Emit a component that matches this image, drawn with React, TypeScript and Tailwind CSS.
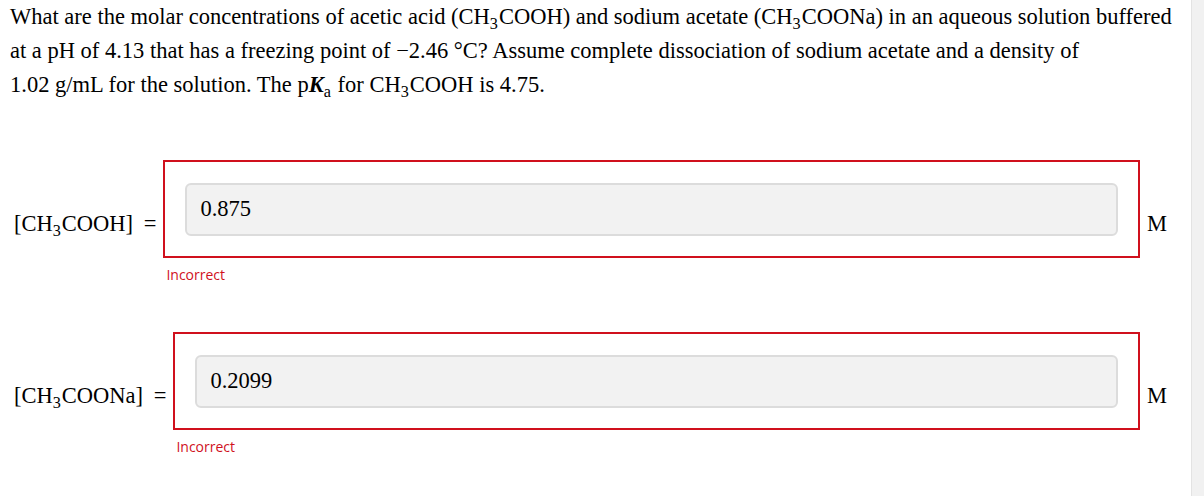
import React from 'react'

const serif = { fontFamily: '"Liberation Serif", "Times New Roman", serif' }

function Sub({ children }: { children: React.ReactNode }) {
  return <sub className="text-[0.72em] bottom-[-0.32em] pr-[1px]">{children}</sub>
}

function AnswerRow({ label, value }: { label: React.ReactNode; value: string }) {
  return (
    <div className="flex items-center">
      <div className="shrink-0 pl-[4px] pr-[7px] text-[22.5px] text-black whitespace-nowrap">
        {label} <span className="ml-[5px]">=</span>
      </div>
      <div className="flex-1 flex flex-col">
        <div className="border-2 border-[#d0101d] px-[20px] pt-[21px] pb-[20px]">
          <div className="h-[53px] rounded-[6px] border-2 border-[#dcdcdc] bg-[#f2f2f2] pl-[13px] pt-[11px] text-[22.5px] text-black leading-[26px]">
            {value}
          </div>
        </div>
        <div
          className="pl-[3px] pt-[7px] h-[30px] text-[14px] leading-[20px] text-[#d0101d]"
          style={{ fontFamily: '"Open Sans", "Noto Sans", sans-serif' }}
        >
          Incorrect
        </div>
      </div>
      <div className="shrink-0 ml-[7px] mr-[24px] text-[22.5px] text-black">M</div>
    </div>
  )
}

export default function App() {
  return (
    <div className="flex w-[1204px] h-[496px] bg-white overflow-hidden" style={serif}>
      <div className="flex-1 pl-[10px]">
        <p className="text-[22.5px] leading-[34px] text-black whitespace-nowrap">
          What are the molar concentrations of acetic acid (CH<Sub>3</Sub>COOH) and sodium acetate (CH<Sub>3</Sub>COONa) in an aqueous solution buffered
          <br />
          at a pH of 4.13 that has a freezing point of −2.46 °C? Assume complete dissociation of sodium acetate and a density of
          <br />
          1.02 g/mL for the solution. The p<b><i>K</i></b><Sub>a</Sub> for CH<Sub>3</Sub>COOH is 4.75.
        </p>
        <div className="mt-[58px] flex flex-col gap-[44px]">
          <AnswerRow
            label={<>[CH<Sub>3</Sub>COOH]</>}
            value="0.875"
          />
          <AnswerRow
            label={<>[CH<Sub>3</Sub>COONa]</>}
            value="0.2099"
          />
        </div>
      </div>
      <div className="w-[13px] shrink-0 bg-[#f1f1f1] border-l border-[#e3e3e3]" />
    </div>
  )
}
